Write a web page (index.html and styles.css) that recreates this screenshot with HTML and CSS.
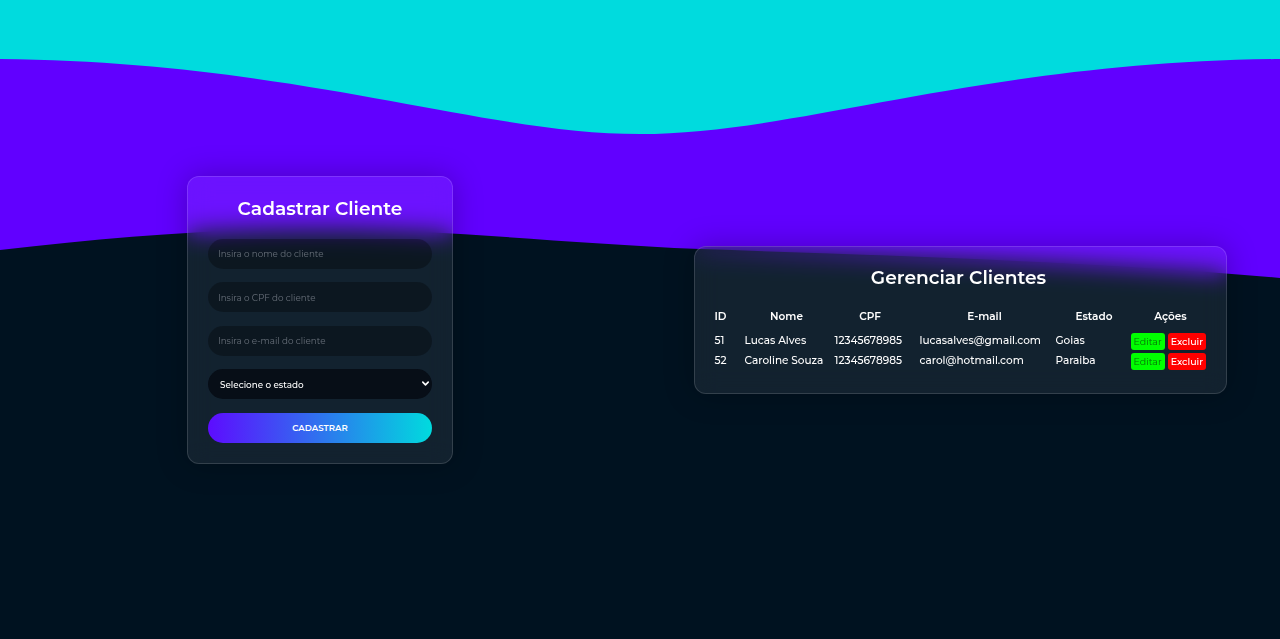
FILE: index.html
```html
<!DOCTYPE html>
<html lang="pt-BR">
<head>
<meta charset="utf-8">
<title>Clientes</title>
<link rel="stylesheet" href="styles.css">
</head>
<body>
<svg class="bg" viewBox="0 0 1280 639" preserveAspectRatio="none" aria-hidden="true">
  <rect x="0" y="0" width="1280" height="639" fill="#00dbde"/>
  <path d="M0 59 C300 62 480 134 640 134 C800 134 980 62 1280 59 L1280 639 L0 639 Z" fill="#6100ff"/>
  <path d="M0 250 C120 236 230 228 330 229 C450 230 560 243 700 249 C900 256 1100 262 1280 278 L1280 639 L0 639 Z" fill="#001220"/>
</svg>
<main class="page">
  <section class="card form-card">
    <h1 class="title">Cadastrar Cliente</h1>
    <form class="form">
      <input class="field" type="text" placeholder="Insira o nome do cliente">
      <input class="field" type="text" placeholder="Insira o CPF do cliente">
      <input class="field" type="email" placeholder="Insira o e-mail do cliente">
      <div class="select-wrap">
        <select class="field select">
          <option>Selecione o estado</option>
        </select>
        <svg class="chev" viewBox="0 0 10 10" aria-hidden="true"><path d="M2 3.5 L5 6.5 L8 3.5" fill="none" stroke="#fff" stroke-width="1.8" stroke-linecap="round" stroke-linejoin="round"/></svg>
      </div>
      <button class="submit" type="button">CADASTRAR</button>
    </form>
  </section>
  <section class="card table-card">
    <h2 class="title">Gerenciar Clientes</h2>
    <table class="clients">
      <colgroup>
        <col class="c-id"><col class="c-nome"><col class="c-cpf"><col class="c-mail"><col class="c-est"><col class="c-acao">
      </colgroup>
      <thead>
        <tr><th class="th-id">ID</th><th>Nome</th><th class="th-cpf">CPF</th><th>E-mail</th><th class="th-right">Estado</th><th class="th-right">Ações</th></tr>
      </thead>
      <tbody>
        <tr>
          <td>51</td><td>Lucas Alves</td><td>12345678985</td><td>lucasalves@gmail.com</td><td>Goias</td>
          <td><div class="actions"><button class="btn edit" type="button">Editar</button><button class="btn del" type="button">Excluir</button></div></td>
        </tr>
        <tr>
          <td>52</td><td>Caroline Souza</td><td>12345678985</td><td>carol@hotmail.com</td><td>Paraiba</td>
          <td><div class="actions"><button class="btn edit" type="button">Editar</button><button class="btn del" type="button">Excluir</button></div></td>
        </tr>
      </tbody>
    </table>
  </section>
</main>
</body>
</html>
```
FILE: styles.css
```css
* { box-sizing: border-box; }
html, body { margin: 0; height: 100%; }
body {
  background: #001220;
  font-family: "Montserrat", "DejaVu Sans", sans-serif;
  color: #fff;
  overflow: hidden;
  position: relative;
}
.bg {
  position: absolute;
  inset: 0;
  width: 100%;
  height: 100%;
  z-index: 0;
  display: block;
}
.page {
  position: relative;
  z-index: 1;
  height: 639px;
  display: grid;
  grid-template-columns: 1fr 1fr;
  align-items: center;
  justify-items: center;
}
.card {
  background: rgba(255,255,255,0.07);
  border: 1px solid rgba(255,255,255,0.14);
  border-radius: 12px;
  backdrop-filter: blur(12px);
  -webkit-backdrop-filter: blur(12px);
  box-shadow: 0 0 30px rgba(0,0,0,0.25);
}
.title {
  margin: 0;
  text-align: center;
  font-size: 18.6px;
  font-weight: 600;
  letter-spacing: 0;
  line-height: 22px;
}
.form-card {
  width: 266px;
  padding: 21px 20px 20px;
}
.form {
  margin-top: 19px;
  display: flex;
  flex-direction: column;
  gap: 13.5px;
}
.field {
  display: block;
  width: 100%;
  height: 30px;
  border: none;
  outline: none;
  border-radius: 15px;
  background: rgba(0,0,0,0.3);
  color: #fff;
  font-family: inherit;
  font-size: 8.8px;
  padding: 0 10px;
}
.field::placeholder { color: #68707a; }
.select-wrap { position: relative; }
.select {
  appearance: none;
  -webkit-appearance: none;
  background: #070e17;
  padding: 0 12px;
  font-size: 8.8px;
  font-weight: 500;
  color: #fff;
}
.chev {
  position: absolute;
  right: 2px;
  top: 10px;
  width: 9px;
  height: 9px;
  pointer-events: none;
}
.submit {
  height: 30px;
  border: none;
  border-radius: 15px;
  background: linear-gradient(90deg, #5d0cff 0%, #00dbde 100%);
  color: #fff;
  font-family: inherit;
  font-size: 8.6px;
  font-weight: 600;
}
.table-card {
  width: 533px;
  padding: 20px 20px 22px 17px;
}
.clients {
  margin-top: 18px;
  width: 100%;
  table-layout: fixed;
  border-collapse: collapse;
  font-size: 10.5px;
}
.c-id { width: 30px; }
.c-nome { width: 90px; }
.c-cpf { width: 85px; }
.c-mail { width: 136px; }
.c-est { width: 75px; }
.c-acao { width: 78px; }
.clients th {
  font-weight: 600;
  padding: 0 3px 4px;
  line-height: 20px;
  text-align: center;
}
.clients th.th-id { text-align: left; }
.clients th.th-cpf { padding-right: 11px; }
.clients th.th-right { padding-left: 11px; }
.clients td {
  padding: 0 3px;
  height: 20px;
  line-height: 20px;
  white-space: nowrap;
  font-weight: 500;
  vertical-align: middle;
}
.actions { display: flex; gap: 3px; align-items: center; height: 20px; padding-top: 1px; }
.btn {
  border: none;
  border-radius: 3px;
  height: 17px;
  padding: 0 3px;
  font-family: inherit;
  font-size: 9.5px;
  line-height: 17px;
}
.edit { background: #00ff00; color: #087008; }
.del { background: #ff0000; color: #fff; font-weight: 500; }
```
